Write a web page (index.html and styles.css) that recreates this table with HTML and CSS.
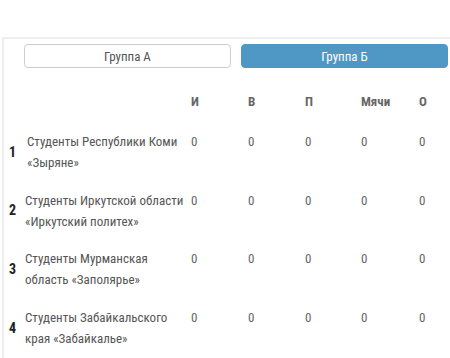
FILE: index.html
```html
<!DOCTYPE html>
<html lang="ru">
<head>
<meta charset="utf-8">
<link rel="stylesheet" href="styles.css">
</head>
<body>
<div class="panel">
  <div class="tabs">
    <button class="tab">Группа А</button>
    <button class="tab tab--active">Группа Б</button>
  </div>
  <div class="table">
    <div class="row row--head">
      <div class="num"></div>
      <div class="name"></div>
      <div class="stat">И</div>
      <div class="stat">В</div>
      <div class="stat">П</div>
      <div class="stat">Мячи</div>
      <div class="stat">О</div>
    </div>
    <div class="row">
      <div class="num">1</div>
      <div class="name name--wide">Студенты Республики Коми «Зыряне»</div>
      <div class="stat">0</div><div class="stat">0</div><div class="stat">0</div><div class="stat">0</div><div class="stat">0</div>
    </div>
    <div class="row">
      <div class="num">2</div>
      <div class="name">Студенты Иркутской области «Иркутский политех»</div>
      <div class="stat">0</div><div class="stat">0</div><div class="stat">0</div><div class="stat">0</div><div class="stat">0</div>
    </div>
    <div class="row">
      <div class="num">3</div>
      <div class="name">Студенты Мурманская область «Заполярье»</div>
      <div class="stat">0</div><div class="stat">0</div><div class="stat">0</div><div class="stat">0</div><div class="stat">0</div>
    </div>
    <div class="row">
      <div class="num">4</div>
      <div class="name">Студенты Забайкальского края «Забайкалье»</div>
      <div class="stat">0</div><div class="stat">0</div><div class="stat">0</div><div class="stat">0</div><div class="stat">0</div>
    </div>
  </div>
</div>
</body>
</html>
```
FILE: styles.css
```css
html, body {
  margin: 0;
  padding: 0;
  background: #fff;
}
body {
  font-family: "Liberation Sans Narrow", "Roboto Condensed", "DejaVu Sans Condensed", sans-serif;
  font-size: 13px;
  color: #555;
  overflow: hidden;
}
.panel {
  margin: 37px 0 0 2px;
  border-top: 2px solid #eee;
  border-left: 2px solid #eee;
  padding: 5px 0 0 0;
}
.tabs {
  display: flex;
  gap: 10px;
  padding-left: 20px;
}
.tab {
  width: 207px;
  height: 24px;
  box-sizing: border-box;
  border: 1px solid #ccc;
  border-radius: 4px;
  background: #fff;
  color: #555;
  font-family: inherit;
  font-size: 13px;
  padding: 0;
}
.tab--active {
  background: #4f97c5;
  border-color: #4f97c5;
  color: #fff;
}
.table {
  margin-top: 23px;
}
.row {
  display: grid;
  grid-template-columns: 21px 166px 57px 57px 56px 58px 40px;
  align-items: start;
  padding: 8px 0 8.7px 0;
  line-height: 21px;
}
.row--head {
  padding: 0 0 11px 0;
  color: #222;
  font-weight: bold;
}
.num {
  align-self: center;
  color: #222;
  font-size: 14px;
  font-weight: bold;
  padding-left: 5px;
}
.name {
  color: #555;
  padding-right: 4px;
}
.name--wide {
  padding-left: 2px;
}
.stat {
  color: #666;
}
```
